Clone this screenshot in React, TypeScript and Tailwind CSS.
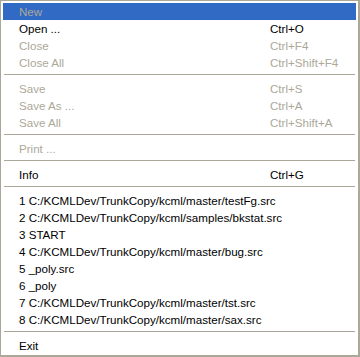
type Item =
  | { kind: "item"; label: string; shortcut?: string; disabled?: boolean; active?: boolean }
  | { kind: "sep" };

const items: Item[] = [
  { kind: "item", label: "New", disabled: true, active: true },
  { kind: "item", label: "Open ...", shortcut: "Ctrl+O" },
  { kind: "item", label: "Close", shortcut: "Ctrl+F4", disabled: true },
  { kind: "item", label: "Close All", shortcut: "Ctrl+Shift+F4", disabled: true },
  { kind: "sep" },
  { kind: "item", label: "Save", shortcut: "Ctrl+S", disabled: true },
  { kind: "item", label: "Save As ...", shortcut: "Ctrl+A", disabled: true },
  { kind: "item", label: "Save All", shortcut: "Ctrl+Shift+A", disabled: true },
  { kind: "sep" },
  { kind: "item", label: "Print ...", disabled: true },
  { kind: "sep" },
  { kind: "item", label: "Info", shortcut: "Ctrl+G" },
  { kind: "sep" },
  { kind: "item", label: "1 C:/KCMLDev/TrunkCopy/kcml/master/testFg.src" },
  { kind: "item", label: "2 C:/KCMLDev/TrunkCopy/kcml/samples/bkstat.src" },
  { kind: "item", label: "3 START" },
  { kind: "item", label: "4 C:/KCMLDev/TrunkCopy/kcml/master/bug.src" },
  { kind: "item", label: "5 _poly.src" },
  { kind: "item", label: "6 _poly" },
  { kind: "item", label: "7 C:/KCMLDev/TrunkCopy/kcml/master/tst.src" },
  { kind: "item", label: "8 C:/KCMLDev/TrunkCopy/kcml/master/sax.src" },
  { kind: "sep" },
  { kind: "item", label: "Exit" },
];

export default function App() {
  return (
    <div className="w-[360px] h-[357px] bg-white">
      <div
        className="w-[360px] h-[357px] bg-white border-[#aca899] border-l border-t border-r-2 border-b-2 p-[2px] text-[11.6px] leading-[17px]"
        style={{ fontFamily: '"Liberation Sans", Arial, sans-serif' }}
      >
        {items.map((item, i) =>
          item.kind === "sep" ? (
            <div key={i} className="h-[9px] pt-[3px] px-px">
              <div className="h-px bg-[#aca899]" />
            </div>
          ) : (
            <div
              key={i}
              className={`flex h-[17px] items-center pl-4 whitespace-nowrap ${
                item.active ? "bg-[#316ac5]" : ""
              } ${item.disabled ? "text-[#aca899]" : "text-black"}`}
            >
              <span className="w-[251px] shrink-0">{item.label}</span>
              {item.shortcut && <span>{item.shortcut}</span>}
            </div>
          )
        )}
      </div>
    </div>
  );
}
